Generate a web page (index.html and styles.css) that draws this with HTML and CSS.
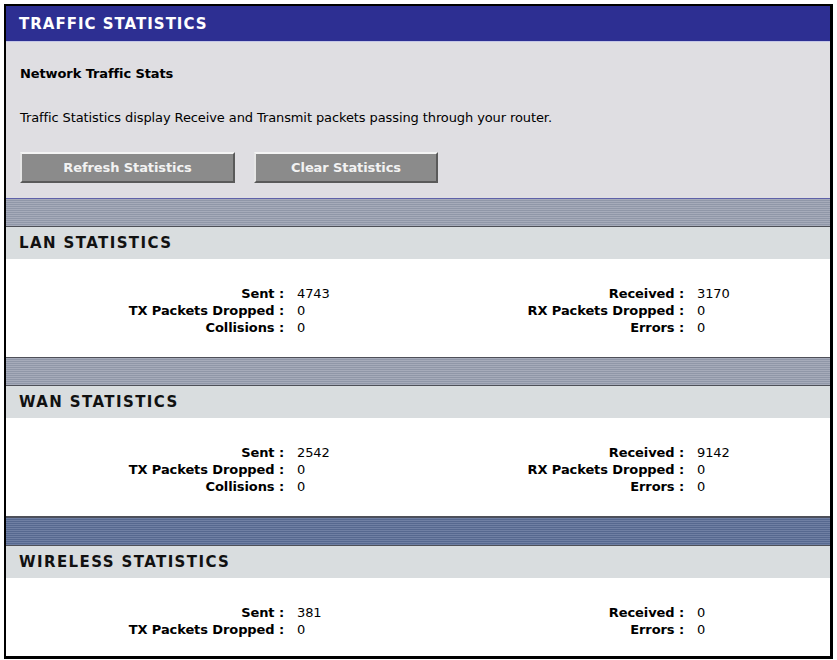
FILE: index.html
```html
<!DOCTYPE html>
<html lang="en">
<head>
  <meta charset="UTF-8" />
  <title>Traffic Statistics</title>
  <link rel="stylesheet" href="styles.css">
</head>
<body>
  <div class="frame">
    <div class="title-bar">TRAFFIC STATISTICS</div>
    <div class="intro">
      <div class="intro-title">Network Traffic Stats</div>
      <p class="intro-text">Traffic Statistics display Receive and Transmit packets passing through your router.</p>
      <div class="actions">
        <button class="btn btn-refresh" type="button">Refresh Statistics</button>
        <button class="btn btn-clear" type="button">Clear Statistics</button>
      </div>
    </div>

    <!-- LAN -->
    <div class="spacer"></div>
    <div class="section-head">LAN STATISTICS</div>
    <div class="stats">
      <span class="label">Sent :</span><span class="value">4743</span>
      <span class="label">Received :</span><span class="value">3170</span>
      <span class="label">TX Packets Dropped :</span><span class="value">0</span>
      <span class="label">RX Packets Dropped :</span><span class="value">0</span>
      <span class="label">Collisions :</span><span class="value">0</span>
      <span class="label">Errors :</span><span class="value">0</span>
    </div>

    <!-- WAN -->
    <div class="spacer"></div>
    <div class="section-head">WAN STATISTICS</div>
    <div class="stats">
      <span class="label">Sent :</span><span class="value">2542</span>
      <span class="label">Received :</span><span class="value">9142</span>
      <span class="label">TX Packets Dropped :</span><span class="value">0</span>
      <span class="label">RX Packets Dropped :</span><span class="value">0</span>
      <span class="label">Collisions :</span><span class="value">0</span>
      <span class="label">Errors :</span><span class="value">0</span>
    </div>

    <!-- Wireless -->
    <div class="spacer spacer-dark"></div>
    <div class="section-head">WIRELESS STATISTICS</div>
    <div class="stats stats-last">
      <span class="label">Sent :</span><span class="value">381</span>
      <span class="label">Received :</span><span class="value">0</span>
      <span class="label">TX Packets Dropped :</span><span class="value">0</span>
      <span class="label">Errors :</span><span class="value">0</span>
    </div>
  </div>
</body>
</html>
```

FILE: styles.css
```css
body {
  margin: 4px;
  background: #fff;
  font-family: 'DejaVu Sans', Verdana, sans-serif;
  font-size: 13px;
  letter-spacing: -0.1px;
  color: #000;
}
.frame {
  border: 3px solid #000;
  border-top-width: 2px;
  border-left-width: 2px;
  background: #fff;
}
.title-bar {
  height: 33px;
  line-height: 33px;
  padding: 2px 0 0 13px;
  background: #2d2f92;
  border-bottom: 1px solid #c4c6e6;
  color: #fff;
  font-weight: bold;
  font-size: 15px;
  letter-spacing: 1px;
}
.intro {
  background: #dfdee2;
  padding: 24px 0 15px 14px;
  border-bottom: 1px solid #5f61a8;
}
.intro-title {
  font-weight: bold;
  line-height: 16px;
}
.intro-text {
  margin: 28px 0 0 0;
  line-height: 16px;
}
.actions {
  display: flex;
  gap: 19px;
  margin-top: 26px;
}
.btn {
  height: 31px;
  background: #8b8b8b;
  border: 2px solid #5a5a5a;
  border-top-color: #f4f4f4;
  border-left-color: #e6e6e6;
  color: #f2f2f2;
  font-family: 'DejaVu Sans', Verdana, sans-serif;
  font-weight: bold;
  font-size: 13px;
  letter-spacing: -0.1px;
  padding: 0;
  cursor: pointer;
}
.btn-refresh { width: 215px; }
.btn-clear { width: 184px; }
.spacer {
  height: 27px;
  background: repeating-linear-gradient(to bottom, #a6abba 0, #a6abba 1px, #9097a8 1px, #9097a8 2px);
  border-bottom: 1px solid #4e5058;
}
.spacer-dark {
  background: repeating-linear-gradient(to bottom, #6f7fa3 0, #6f7fa3 1px, #56688f 1px, #56688f 2px);
  border-top: 1px solid #4a4f5c;
}
.section-head {
  height: 32px;
  line-height: 32px;
  padding-left: 13px;
  background: #d9dddf;
  font-weight: bold;
  font-size: 15px;
  letter-spacing: 1.4px;
  color: #111;
}
.stats {
  display: grid;
  grid-template-columns: 278px 130px 270px 1fr;
  grid-auto-rows: 17px;
  align-items: center;
  padding: 26px 0 21px 0;
  border-bottom: 1px solid #4e5058;
}
.stats-last {
  padding-bottom: 18px;
  border-bottom: 0;
}
.label {
  text-align: right;
  font-weight: bold;
}
.value {
  padding-left: 13px;
}
```
